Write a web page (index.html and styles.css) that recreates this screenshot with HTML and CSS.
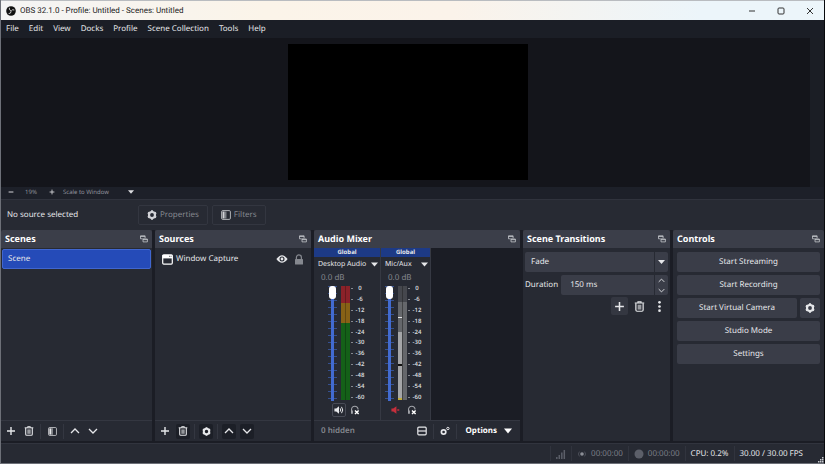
FILE: index.html
```html
<!DOCTYPE html>
<html lang="en">
<head>
<meta charset="utf-8">
<title>OBS 32.1.0 - Profile: Untitled - Scenes: Untitled</title>
<link rel="stylesheet" href="styles.css">
</head>
<body>
<svg class="defs" aria-hidden="true">
  <symbol id="plus" viewBox="0 0 10 10"><path d="M5 1v8M1 5h8" fill="none" stroke="currentColor" stroke-width="1.4"/></symbol>
  <symbol id="minus" viewBox="0 0 10 10"><path d="M1 5h8" fill="none" stroke="currentColor" stroke-width="1.6"/></symbol>
  <symbol id="trash" viewBox="0 0 10 10"><path d="M.7 1.8h8.6M3.6 1.6V.7h2.8v.9" fill="none" stroke="currentColor" stroke-width="1"/><path d="M1.7 2v6.2q0 1.1 1.1 1.1h4.4q1.1 0 1.1-1.1V2" fill="none" stroke="currentColor" stroke-width="1.1"/><path d="M3.3 3.4h3.4v4.4H3.3z" fill="currentColor" opacity=".6"/></symbol>
  <symbol id="filter" viewBox="0 0 10 10"><rect x=".6" y=".6" width="8.8" height="8.8" rx="1.2" fill="none" stroke="currentColor" stroke-width="1" opacity=".8"/><path d="M1.5 1.5h2v7h-2z" fill="currentColor"/><path d="M3.5 1.5h2v7h-2z" fill="currentColor" opacity=".5"/></symbol>
  <symbol id="up" viewBox="0 0 10 10"><path d="M1 7l4-4 4 4" fill="none" stroke="currentColor" stroke-width="1.3"/></symbol>
  <symbol id="down" viewBox="0 0 10 10"><path d="M1 3l4 4 4-4" fill="none" stroke="currentColor" stroke-width="1.3"/></symbol>
  <symbol id="caret" viewBox="0 0 10 10"><path d="M0 2h10L5 8z" fill="currentColor"/></symbol>
  <symbol id="gear" viewBox="0 0 10 10"><circle cx="5" cy="5" r="3" fill="none" stroke="currentColor" stroke-width="2.2"/><path d="M4 .3h2v1.800H4zM4 7.900h2v1.800H4z" fill="currentColor"/><path d="M4 .3h2v1.800H4zM4 7.900h2v1.800H4z" fill="currentColor" transform="rotate(60 5 5)"/><path d="M4 .3h2v1.800H4zM4 7.900h2v1.800H4z" fill="currentColor" transform="rotate(120 5 5)"/></symbol>
  <symbol id="popout" viewBox="0 0 8 8"><path d="M.5.8h4.6v3H.5zM.5 1.5h4.6" fill="none" stroke="currentColor" stroke-width=".8"/><path d="M2.6 3.4h5v3.8h-5z" fill="#3b3e49"/><path d="M3 4h4.4v2.9H3zM3 4.6h4.4" fill="none" stroke="currentColor" stroke-width=".8"/></symbol>
  <symbol id="window" viewBox="0 0 11 11"><rect x=".7" y=".9" width="9.6" height="9.2" rx="1" fill="none" stroke="currentColor" stroke-width="1.2"/><path d="M.5 1h10v3.4H.5z" fill="currentColor"/><path d="M7 2.3h.9M8.6 2.3h.9" stroke="#272a33" stroke-width=".8"/></symbol>
  <symbol id="eye" viewBox="0 0 12 10"><path d="M.4 5Q6-2.600 11.600 5 6 12.600.4 5z" fill="currentColor"/><circle cx="6" cy="5" r="2.5" fill="#272a33"/><circle cx="6" cy="5" r="1.400" fill="currentColor"/></symbol>
  <symbol id="lock" viewBox="0 0 10 11"><path d="M2.400 5V3.400a2.500 2.500 0 0 1 5 0V5" fill="none" stroke="currentColor" stroke-width="1.200"/><rect x="1" y="5" width="8" height="5.500" rx=".6" fill="currentColor"/></symbol>
  <symbol id="speaker" viewBox="0 0 12 10"><path d="M.5 3.300h2.200L6 .6v8.800L2.700 6.700H.5z" fill="currentColor"/><path d="M7.400 3q1.400 2 0 4M9 1.200q3 3.800 0 7.600" fill="none" stroke="currentColor" stroke-width="1.200"/></symbol>
  <symbol id="muted" viewBox="0 0 12 10"><path d="M.5 3.300h2.200L6.500.6v8.800L2.700 6.700H.5zM7.500 4h2.400v2H7.500z" fill="currentColor"/></symbol>
  <symbol id="phones" viewBox="0 0 11 11"><path d="M1.700 9V5a3.600 3.600 0 0 1 7.200 0" fill="none" stroke="#a2a4aa" stroke-width="1.200"/><path d="M1.200 6h2v3.600h-2z" fill="#a2a4aa"/><path d="M5.500 6l4 4M9.500 6l-4 4" stroke="#fff" stroke-width="1.600"/></symbol>
  <symbol id="layout" viewBox="0 0 10 10"><rect x=".8" y="1.200" width="8.400" height="7.600" rx="1" fill="none" stroke="currentColor" stroke-width="1.200"/><path d="M1 5h8" stroke="currentColor" stroke-width="1.200"/></symbol>
  <symbol id="gears" viewBox="0 0 10 10"><circle cx="3.600" cy="6" r="2.200" fill="none" stroke="currentColor" stroke-width="1.700"/><circle cx="7.900" cy="2.500" r="1.200" fill="none" stroke="currentColor" stroke-width="1"/></symbol>
  <symbol id="dots" viewBox="0 0 10 10"><circle cx="5" cy="1.200" r="1.200" fill="currentColor"/><circle cx="5" cy="5" r="1.200" fill="currentColor"/><circle cx="5" cy="8.800" r="1.200" fill="currentColor"/></symbol>
</svg>

<div class="app">
  <header class="titlebar">
    <svg class="logo" viewBox="0 0 10 10"><circle cx="5" cy="5" r="4.800" fill="#111"/><path d="M3.400 1.800Q2.700 4 5 4.700M8.300 4Q6.300 3 5.200 5M2.600 7.700Q5.300 7.600 5 5.200" fill="none" stroke="#ddd" stroke-width=".9"/></svg>
    <h1>OBS 32.1.0 - Profile: Untitled - Scenes: Untitled</h1>
    <div class="window-buttons">
      <button aria-label="Minimize"><svg viewBox="0 0 8 8"><path d="M1 4h6"/></svg></button>
      <button aria-label="Maximize"><svg viewBox="0 0 8 8"><rect x="1" y="1" width="6" height="6" rx="1"/></svg></button>
      <button aria-label="Close"><svg viewBox="0 0 8 8"><path d="M1 1l6 6M7 1L1 7"/></svg></button>
    </div>
  </header>

  <nav class="menubar">
    <a href="#">File</a><a href="#">Edit</a><a href="#">View</a><a href="#">Docks</a><a href="#">Profile</a><a href="#">Scene Collection</a><a href="#">Tools</a><a href="#">Help</a>
  </nav>

  <main class="preview"><div class="canvas"></div></main>

  <div class="zoombar">
    <button aria-label="Zoom out"><svg><use href="#minus"/></svg></button>
    <output>19%</output>
    <button aria-label="Zoom in"><svg><use href="#plus"/></svg></button>
    <div class="picker scale-picker">
      <select aria-label="Preview scaling"><option>Scale to Window</option></select>
      <svg><use href="#caret"/></svg>
    </div>
  </div>

  <section class="context">
    <span class="context-label">No source selected</span>
    <button class="ghost" disabled><svg><use href="#gear"/></svg>Properties</button>
    <button class="ghost" disabled><svg><use href="#filter"/></svg>Filters</button>
  </section>

  <div class="docks">
    <section class="dock">
      <header><h2>Scenes</h2><button aria-label="Pop out Scenes"><svg><use href="#popout"/></svg></button></header>
      <ul class="list"><li class="selected">Scene</li></ul>
      <footer class="toolbar">
        <button aria-label="Add scene"><svg><use href="#plus"/></svg></button>
        <button aria-label="Remove scene"><svg><use href="#trash"/></svg></button>
        <i class="sep"></i>
        <button aria-label="Scene filters"><svg class="dim"><use href="#filter"/></svg></button>
        <i class="sep"></i>
        <button aria-label="Move scene up"><svg><use href="#up"/></svg></button>
        <button aria-label="Move scene down"><svg><use href="#down"/></svg></button>
      </footer>
    </section>

    <section class="dock">
      <header><h2>Sources</h2><button aria-label="Pop out Sources"><svg><use href="#popout"/></svg></button></header>
      <ul class="list">
        <li><svg class="source-icon"><use href="#window"/></svg><span class="grow">Window Capture</span>
          <button aria-label="Hide"><svg class="eye"><use href="#eye"/></svg></button>
          <button aria-label="Lock"><svg class="lock"><use href="#lock"/></svg></button></li>
      </ul>
      <footer class="toolbar">
        <button aria-label="Add source"><svg><use href="#plus"/></svg></button>
        <button class="sunk" aria-label="Remove source"><svg><use href="#trash"/></svg></button>
        <i class="sep"></i>
        <button class="sunk" aria-label="Source properties"><svg class="dim"><use href="#gear"/></svg></button>
        <i class="sep"></i>
        <button class="sunk" aria-label="Move source up"><svg><use href="#up"/></svg></button>
        <button class="sunk" aria-label="Move source down"><svg><use href="#down"/></svg></button>
      </footer>
    </section>

    <section class="dock">
      <header><h2>Audio Mixer</h2><button aria-label="Pop out Audio Mixer"><svg><use href="#popout"/></svg></button></header>
      <div class="mixer">
        <article class="strip">
          <h3>Global</h3>
          <button class="name">Desktop Audio<svg><use href="#caret"/></svg></button>
          <p class="db">0.0 dB</p>
          <div class="levels">
            <input class="fader" type="range" min="-60" max="0" value="0" aria-label="Desktop Audio volume">
            <div class="meter live"></div>
            <ol class="scale"><li>0</li><li>-6</li><li>-12</li><li>-18</li><li>-24</li><li>-30</li><li>-36</li><li>-42</li><li>-48</li><li>-54</li><li>-60</li></ol>
          </div>
          <div class="strip-buttons">
            <button class="framed" aria-label="Mute Desktop Audio"><svg><use href="#speaker"/></svg></button>
            <button aria-label="Monitor Desktop Audio"><svg><use href="#phones"/></svg></button>
          </div>
        </article>
        <article class="strip">
          <h3>Global</h3>
          <button class="name">Mic/Aux<svg><use href="#caret"/></svg></button>
          <p class="db">0.0 dB</p>
          <div class="levels">
            <input class="fader" type="range" min="-60" max="0" value="0" aria-label="Mic/Aux volume">
            <div class="meter silent"></div>
            <ol class="scale"><li>0</li><li>-6</li><li>-12</li><li>-18</li><li>-24</li><li>-30</li><li>-36</li><li>-42</li><li>-48</li><li>-54</li><li>-60</li></ol>
          </div>
          <div class="strip-buttons">
            <button class="red" aria-label="Unmute Mic/Aux"><svg><use href="#muted"/></svg></button>
            <button aria-label="Monitor Mic/Aux"><svg><use href="#phones"/></svg></button>
          </div>
        </article>
      </div>
      <footer class="toolbar mixer-bar">
        <span class="hidden-count grow">0 hidden</span>
        <button aria-label="Mixer layout"><svg><use href="#layout"/></svg></button>
        <i class="sep"></i>
        <button aria-label="Advanced audio"><svg><use href="#gears"/></svg></button>
        <i class="sep"></i>
        <button class="options">Options<svg><use href="#caret"/></svg></button>
      </footer>
    </section>

    <section class="dock">
      <header><h2>Scene Transitions</h2><button aria-label="Pop out Scene Transitions"><svg><use href="#popout"/></svg></button></header>
      <div class="transitions">
        <div class="picker field">
          <select aria-label="Transition"><option>Fade</option></select>
          <svg><use href="#caret"/></svg>
        </div>
        <div class="duration">
          <label for="duration">Duration</label>
          <div class="field spin">
            <input id="duration" type="text" value="150 ms">
            <div class="steps">
              <button aria-label="Increase"><svg><use href="#up"/></svg></button>
              <button aria-label="Decrease"><svg><use href="#down"/></svg></button>
            </div>
          </div>
        </div>
        <div class="transition-buttons">
          <button class="raised" aria-label="Add transition"><svg><use href="#plus"/></svg></button>
          <button aria-label="Remove transition"><svg><use href="#trash"/></svg></button>
          <button aria-label="Transition menu"><svg><use href="#dots"/></svg></button>
        </div>
      </div>
    </section>

    <section class="dock">
      <header><h2>Controls</h2><button aria-label="Pop out Controls"><svg><use href="#popout"/></svg></button></header>
      <div class="controls">
        <button>Start Streaming</button>
        <button>Start Recording</button>
        <div class="pair"><button>Start Virtual Camera</button><button aria-label="Virtual camera settings"><svg><use href="#gear"/></svg></button></div>
        <button>Studio Mode</button>
        <button>Settings</button>
      </div>
    </section>
  </div>

  <footer class="status">
    <span class="cell"><svg viewBox="0 0 10 10"><path d="M.8 8v2M3.300 6v4M5.800 3.500V10M8.300 1v9" stroke="#5c5f69" stroke-width="1.500"/></svg></span>
    <span class="cell idle"><svg viewBox="0 0 10 10"><circle cx="5" cy="5" r="1.800" fill="#8b8e96"/><path d="M2.400 2.600q-2 2.400 0 4.800M7.600 2.600q2 2.400 0 4.800" fill="none" stroke="#4b4e58"/></svg>00:00:00</span>
    <span class="cell idle"><svg viewBox="0 0 10 10"><circle cx="5" cy="5" r="4.500" fill="#5c5f69"/></svg>00:00:00</span>
    <span class="cell">CPU: 0.2%</span>
    <span class="cell">30.00 / 30.00 FPS</span>
    <svg class="grip" viewBox="0 0 6 6"><path d="M4 0h1.500v1.500H4zM2 2h1.500v1.500H2zM4 2h1.500v1.500H4zM0 4h1.500v1.500H0zM2 4h1.500v1.500H2zM4 4h1.500v1.500H4z" fill="#c8cad0"/></svg>
  </footer>
</div>
</body>
</html>
```

FILE: styles.css
```css
* { box-sizing: border-box; }

body {
  margin: 0;
  background: #16171d;
  color: #e6e7ea;
  font: 8px/12px "Noto Sans", "Open Sans", sans-serif;
  text-rendering: geometricPrecision;
}

h1, h2, h3, p, ul, ol { margin: 0; padding: 0; font-size: inherit; list-style: none; }

button, input, select {
  margin: 0;
  padding: 0;
  border: 0;
  background: none;
  color: inherit;
  font: inherit;
  text-rendering: inherit;
}

button { display: flex; align-items: center; justify-content: center; }
a { color: inherit; text-decoration: none; }
svg { display: block; flex: none; width: 10px; height: 10px; }
.defs { position: absolute; width: 0; height: 0; }
.grow { flex: 1; }

.app {
  display: flex;
  flex-direction: column;
  min-height: 100vh;
  border: solid #6d7078;
  border-width: 0 0 1px 1px;
  border-right: 1px solid #08090c;
  background: #272a33;
}

/* Title bar and menus */
.titlebar {
  display: flex;
  align-items: center;
  height: 20px;
  padding: 0 0 0 5px;
  border-top: 1px solid #b9bcc0;
  background: linear-gradient(90deg, #f4f4f4, #fbf4e9 32%, #fbf3ea 55%, #ecf5fa 85%);
  color: #222;
}
.titlebar h1 { flex: 1; padding-left: 4px; font-family: Roboto, "Noto Sans", sans-serif; font-weight: 400; }
.window-buttons { display: flex; }
.window-buttons button { width: 29px; height: 18px; }
.window-buttons svg { width: 8px; height: 8px; fill: none; stroke: #333; stroke-width: 1; }

.menubar {
  display: flex;
  align-items: center;
  gap: 10px;
  height: 18px;
  padding: 0 5px;
  background: #1b1e26;
}

/* Preview */
.preview {
  display: flex;
  justify-content: center;
  flex: 1;
  padding: 6px 14px 6px 5px;
  background: linear-gradient(90deg, #14151b calc(100% - 14px), #1b1e25 0);
}
.canvas { height: 100%; min-height: 136px; aspect-ratio: 240 / 136; background: #000; }

.zoombar {
  display: flex;
  align-items: center;
  height: 12px;
  padding-left: 6px;
  padding-bottom: 2px;
  background: #1d2029;
  color: #999ba2;
  font-family: "Open Sans", "Noto Sans", sans-serif;
  font-size: 6px;
}
.zoombar svg { width: 6px; height: 6px; color: #dcdde0; }
.zoombar button { width: 7px; }
.zoombar output { width: 34px; text-align: center; }
.picker { display: flex; align-items: center; }
.picker select { flex: 1; appearance: none; }
.scale-picker { width: 71px; margin-left: 8px; }

/* Source context bar */
.context {
  display: flex;
  align-items: center;
  gap: 4px;
  height: 31px;
  padding-left: 6px;
  border-top: 1px solid #30333d;
}
.context-label { width: 127px; }
.ghost {
  gap: 3px;
  height: 20px;
  padding: 0 8px;
  border: 1px solid #333640;
  border-radius: 2px;
  color: #85888f;
}
.ghost svg { color: #d2d3d7; }

/* Docks */
.docks {
  display: grid;
  grid-template-columns: 151fr 156fr 206fr 147fr 151fr;
  gap: 3px;
  min-height: 213px;
  border-bottom: 2px solid #1b1d25;
  background: #1b1d25;
}
.dock { display: flex; flex-direction: column; min-width: 0; background: #272a33; }
.dock > header {
  display: flex;
  align-items: center;
  justify-content: space-between;
  height: 18px;
  padding: 0 4px;
  border-radius: 2px 2px 0 0;
  background: #3b3e49;
  color: #fff;
  font-size: 9px;
}
.dock > header svg { width: 8px; height: 8px; color: #c4c6cc; }

.list { flex: 1; padding: 1px; }
.list li {
  display: flex;
  align-items: center;
  height: 20px;
  padding: 0 5px;
  border: 1px solid transparent;
  border-radius: 2px;
}
.list .selected { border-color: #4066cf; background: #254bb8; }
.list .source-icon { width: 11px; height: 11px; margin-right: 3px; color: #fff; }
.list .eye { width: 12px; }
.list .lock { height: 11px; margin-left: 6px; color: #85888f; }

.toolbar {
  display: flex;
  align-items: center;
  height: 21px;
  padding: 0 1px;
  border-top: 1px solid #343741;
}
.toolbar button { width: 14px; height: 15px; margin: 0 2px; border-radius: 2px; }
.toolbar .sunk { background: #1c1f27; }
.toolbar .dim { width: 9px; height: 9px; }
.sep { width: 1px; height: 15px; margin: 0 2px; background: #343741; }

/* Mixer */
.mixer { display: flex; flex: 1; background: #1b1d25; }
.strip { width: 67px; border-right: 1px solid #363943; background: #272a33; }
.strip + .strip { width: 50px; }
.strip h3 { height: 9px; background: #1d3a86; font-size: 6px; line-height: 9px; text-align: center; }
.name { justify-content: space-between; width: 100%; height: 15px; padding: 0 2px 0 4px; font-size: 7px; }
.name svg { width: 7px; height: 7px; }
.db { height: 13px; padding-left: 7px; color: #85888f; line-height: 12px; }
.levels { display: flex; height: 117px; padding: 1px 0 1px 14px; }
.strip + .strip .levels { padding-left: 4px; }

.fader {
  appearance: none;
  width: 9px;
  height: 115px;
  writing-mode: vertical-lr;
  direction: rtl;
  background: linear-gradient(90deg, transparent 3px, #426bd0 3px 6px, transparent 6px),
    repeating-linear-gradient(#35508f 0 1px, transparent 1px 7px);
}
.fader::-webkit-slider-thumb {
  appearance: none;
  width: 7px;
  height: 13px;
  border-radius: 3px;
  background: #fff;
}

.meter { width: 9px; height: 114px; margin-left: 4px; }
.live {
  background: linear-gradient(90deg, transparent 4px, #0004 4px 5px, transparent 5px),
    linear-gradient(#8b2229 0 17px, #876116 17px 37px, #146018 37px);
}
.silent {
  background:
    linear-gradient(#e5e6e8, #e5e6e8) 0 31px / 4px 1px no-repeat,
    linear-gradient(#111, #111) 0 78px / 4px 2px no-repeat,
    linear-gradient(90deg, transparent 4px, #2228 4px 5px, transparent 5px),
    linear-gradient(#c3ae3c, #c3ae3c) 0 112px / 4px 2px no-repeat,
    linear-gradient(#a5a6a8, #a5a6a8) 0 46px / 4px 66px no-repeat,
    linear-gradient(#45474d 0 16px, #65676b 16px);
}
.scale {
  display: flex;
  flex-direction: column;
  justify-content: space-between;
  height: 114px;
  color: #d6d8dc;
  font-size: 6px;
  font-weight: 600;
  line-height: 5px;
}
.scale li { display: flex; align-items: center; justify-content: center; width: 17px; padding-left: 3px; }
.scale li::before { content: ""; width: 2px; height: 1px; margin-right: auto; margin-left: -2px; background: #85888f; }
.scale li::after { content: ""; margin-right: auto; }

.strip-buttons { display: flex; gap: 2px; height: 18px; padding: 1px 0 0 18px; }
.strip + .strip .strip-buttons { padding-left: 8px; }
.strip-buttons button { width: 14px; height: 14px; border-radius: 2px; }
.framed { border: 1px solid #484b56; }
.red { color: #c52f3c; }

.mixer-bar { padding-left: 7px; font-weight: 600; }
.hidden-count { color: #85888f; }
.toolbar .options { gap: 7px; width: auto; padding: 0 5px; color: #fff; font-weight: 700; }
.options svg { width: 8px; height: 8px; }

/* Transitions */
.transitions { padding: 4px 2px 0; }
.field { height: 20px; border-radius: 2px; background: #3a3d48; }
.transitions .picker select { height: 20px; padding-left: 6px; }
.transitions .picker svg { width: 14px; height: 20px; padding: 0 3px; border-left: 1px solid #272a33; }
.duration { display: flex; align-items: center; gap: 3px; margin-top: 3px; }
.spin { display: flex; flex: 1; }
.spin input { flex: 1; width: 0; padding-left: 9px; }
.steps { display: flex; flex-direction: column; width: 14px; border-left: 1px solid #272a33; }
.steps button { height: 10px; }
.steps svg { width: 7px; height: 7px; }
.transition-buttons { display: flex; justify-content: flex-end; gap: 3px; margin-top: 2px; }
.transition-buttons button { width: 17px; height: 18px; border-radius: 2px; }
.transition-buttons svg { width: 11px; height: 11px; }
.raised { background: #343741; }

/* Controls */
.controls { display: flex; flex-direction: column; gap: 3px; padding: 4px 4px 0; }
.controls button { height: 20px; border-radius: 2px; background: #3a3d48; }
.pair { display: flex; gap: 3px; }
.pair button:first-child { flex: 1; }
.pair button:last-child { width: 20px; }

/* Status bar */
.status {
  display: flex;
  align-items: center;
  justify-content: flex-end;
  height: 20px;
  border-top: 1px solid #31343e;
}
.cell { display: flex; align-items: center; gap: 4px; height: 15px; padding: 0 5px; border-left: 1px solid #31343e; }
.cell.idle { color: #7b7e87; }
.grip { align-self: flex-end; width: 6px; height: 6px; margin-left: 10px; }
```
